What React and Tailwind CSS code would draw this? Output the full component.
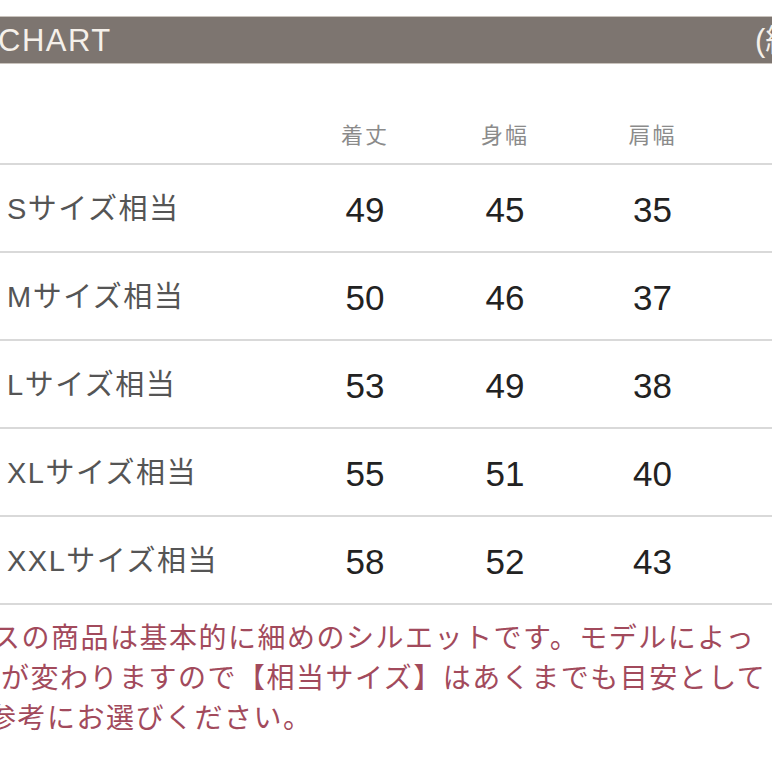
export default function App() {
  const rows = [
    { label: 'Sサイズ相当', v: ['49', '45', '35'] },
    { label: 'Mサイズ相当', v: ['50', '46', '37'] },
    { label: 'Lサイズ相当', v: ['53', '49', '38'] },
    { label: 'XLサイズ相当', v: ['55', '51', '40'] },
    { label: 'XXLサイズ相当', v: ['58', '52', '43'] },
  ];
  const font = { fontFamily: '"Liberation Sans", "Noto Sans CJK JP", sans-serif' };
  return (
    <div className="h-[772px] w-[772px] overflow-hidden bg-white pt-4" style={font}>
      <div className="grid h-[48px] grid-cols-[755px_auto] items-center overflow-hidden border-y border-[#c9c3bd] bg-[#7d7570] text-[31px] leading-none text-[#f5f0ea]">
        <span className="-ml-[2px] tracking-[1.5px]">CHART</span>
        <span className="whitespace-nowrap">(約cm)</span>
      </div>

      <div className="grid h-[99px] grid-cols-[295px_140px_140px_155px] items-end pb-[11px] text-[22px] tracking-[2px] text-[#8b8b8b]">
        <span></span>
        <span className="text-center">着丈</span>
        <span className="text-center">身幅</span>
        <span className="text-center">肩幅</span>
      </div>

      {rows.map(r => (
        <div
          key={r.label}
          className="grid h-[88px] grid-cols-[295px_140px_140px_155px] items-center border-t-2 border-[#d9d9d9]"
        >
          <span className="pl-[7px] pt-[4px] text-[29px] tracking-[1.5px] text-[#555]">{r.label}</span>
          {r.v.map((n, i) => (
            <span key={i} className="pt-[4px] text-center text-[35px] text-[#222]">
              {n}
            </span>
          ))}
        </div>
      ))}

      <div className="border-t-2 border-[#d9d9d9] pt-[14px] text-[28px] leading-[40px] tracking-[1.5px] text-[#a24a5c] whitespace-nowrap">
        <p className="-ml-[8px]">スの商品は基本的に細めのシルエットです。モデルによっ</p>
        <p className="ml-[1px]">が変わりますので【相当サイズ】はあくまでも目安として</p>
        <p className="-ml-[12px]">参考にお選びください。</p>
      </div>
    </div>
  );
}
